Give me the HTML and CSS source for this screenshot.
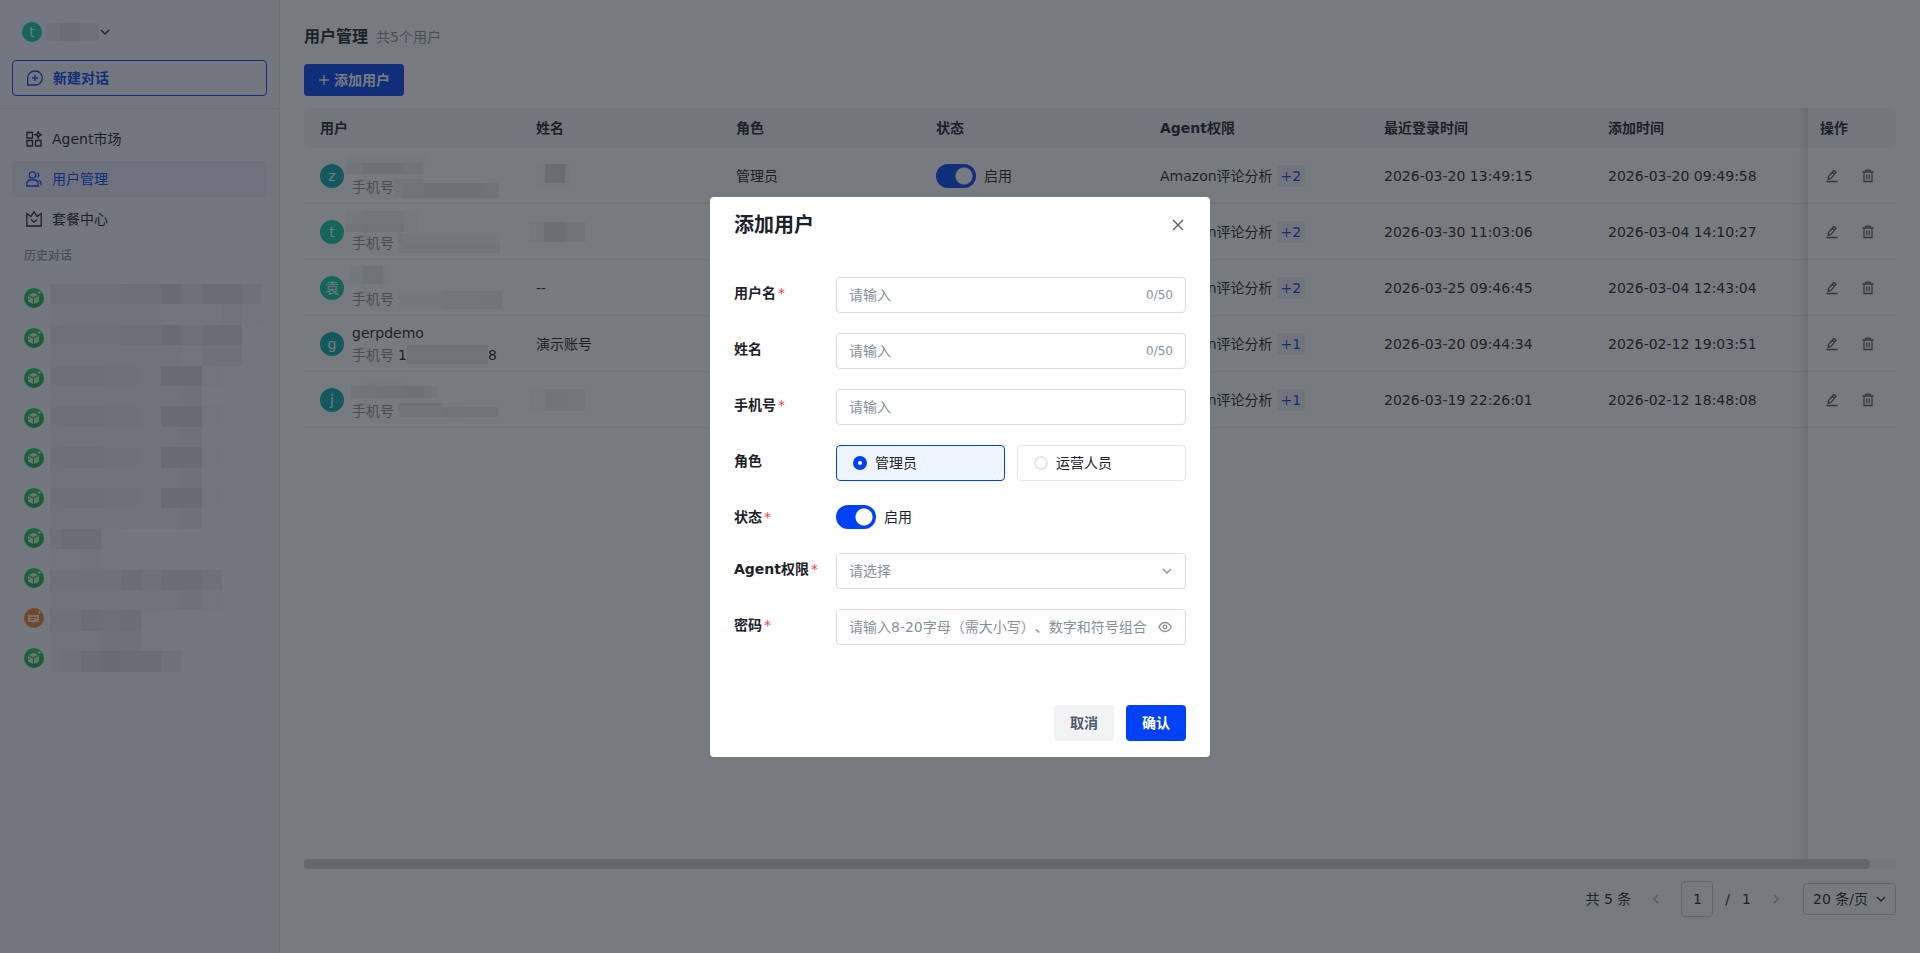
FILE: index.html
```html
<!DOCTYPE html>
<html lang="zh-CN">

<head>
  <meta charset="UTF-8">
  <meta name="viewport" content="width=device-width, initial-scale=1.0">
  <title>用户管理</title>
  <link rel="stylesheet" href="styles.css">
</head>

<body>

  <!-- 图标 -->
  <svg class="sprite" aria-hidden="true">
    <symbol id="i-down" viewBox="0 0 12 12"><path d="M2 4l4 4 4-4" /></symbol>
    <symbol id="i-left" viewBox="0 0 12 12"><path d="M8 2L4 6l4 4" /></symbol>
    <symbol id="i-right" viewBox="0 0 12 12"><path d="M4 2l4 4-4 4" /></symbol>
    <symbol id="i-plus" viewBox="0 0 12 12"><path d="M6 1v10M1 6h10" /></symbol>
    <symbol id="i-edit" viewBox="0 0 14 14"><path d="M1.500 12.500h11M3 10.300l.5-2.800 5.200-6 2.300 1.900-5.200 6zM7.300 3.200l2.200 1.900" /></symbol>
    <symbol id="i-trash" viewBox="0 0 14 14"><path d="M1.500 3h11M4.700 2.500v-1.300h4.600v1.300M3 3.500v9h8v-9M5.800 5.500v4.700M8.200 5.500v4.700" /></symbol>
    <symbol id="i-box" viewBox="0 0 20 20">
      <path class="solid" d="M9.500 4.800l4.700 2.200-4.700 2.200-4.700-2.200zM4 8l5 2.400v5.600l-5-2.500zM15 8v5.500l-5 2.500v-5.600zM14 4h1V3h1v1h1v1h-1v1h-1V5h-1z" />
      <path class="cut" d="M5 10.600l1.600.8" />
    </symbol>
    <symbol id="i-note" viewBox="0 0 20 20">
      <path class="solid" d="M4 7h11v7h-4.500l-1 1-1-1H4zM14 4h1V3h1v1h1v1h-1v1h-1V5h-1z" />
      <path class="cut-orange" d="M6 9.500h7M6 11.500h4" />
    </symbol>
  </svg>

  <div class="layout">
    <aside class="sidebar">
      <button class="account" type="button">
        <span class="avatar avatar-sm green">t</span>
        <svg class="mosaic" width="54" height="18"><rect class="m3" width="15" height="18" /><rect class="m6" x="15" width="20" height="18" /><rect class="m4" x="35" width="19" height="18" /></svg>
        <svg class="icon icon-12"><use href="#i-down" /></svg>
      </button>
      <div class="new-chat">
        <button class="new-chat-btn" type="button">
          <svg class="icon icon-16" viewBox="0 0 16 16"><path d="M.7 15V8A7 7 0 0 1 7.700 1h.6a7 7 0 0 1 0 14zM8 5v6M5 8h6" /></svg>
          新建对话
        </button>
      </div>
      <nav class="nav">
        <a href="#">
          <svg class="icon icon-16" viewBox="0 0 16 16"><path d="M1 1.500h5.500V7H1zM1 9.500h5.500V15H1zM9.500 9.500H15V15H9.500zM12.300.6l.9 2.300 2.300.9-2.300.9-.9 2.300-.9-2.300-2.300-.9 2.300-.9z" /></svg>
          Agent市场
        </a>
        <a href="#" class="active">
          <svg class="icon icon-16" viewBox="0 0 16 16"><circle cx="6.500" cy="4" r="3.200" /><path d="M.8 15v-2.500A3.500 3.500 0 0 1 4.300 9h4.400a3.500 3.500 0 0 1 3.500 3.500V15zM11.500 1.800a2.900 2.900 0 0 1 0 4.600M13 9.300c1.500.8 2.200 2.200 2.200 3.700v1.500" /></svg>
          用户管理
        </a>
        <a href="#">
          <svg class="icon icon-16" viewBox="0 0 16 16"><path d="M.8 15V2.500l4 3L8 .8l3.200 4.700 4-3V15zM5 8.500l3 2.700 3-2.700" /></svg>
          套餐中心
        </a>
      </nav>
      <h2 class="history-title">历史对话</h2>
      <div class="history">
        <ul>
          <li><svg><use href="#i-box" /></svg></li>
          <li><svg><use href="#i-box" /></svg></li>
          <li><svg><use href="#i-box" /></svg></li>
          <li><svg><use href="#i-box" /></svg></li>
          <li><svg><use href="#i-box" /></svg></li>
          <li><svg><use href="#i-box" /></svg></li>
          <li><svg><use href="#i-box" /></svg></li>
          <li><svg><use href="#i-box" /></svg></li>
          <li class="orange"><svg><use href="#i-note" /></svg></li>
          <li><svg><use href="#i-box" /></svg></li>
        </ul>
        <svg class="mosaic" id="historyMosaic" width="212" height="390" viewBox="0 0 212 390"></svg>
      </div>
    </aside>

    <main class="main">
      <header class="page-head">
        <h1>用户管理</h1>
        <span>共5个用户</span>
      </header>
      <button class="btn btn-primary btn-add" type="button">
        <svg class="icon icon-12"><use href="#i-plus" /></svg>
        添加用户
      </button>

      <div class="table-wrap">
        <table class="table">
          <colgroup>
            <col class="c-user"><col class="c-name"><col class="c-role"><col class="c-wide"><col class="c-wide"><col class="c-wide"><col><col class="c-action">
          </colgroup>
          <thead>
            <tr>
              <th>用户</th>
              <th>姓名</th>
              <th>角色</th>
              <th>状态</th>
              <th>Agent权限</th>
              <th>最近登录时间</th>
              <th>添加时间</th>
              <th>操作</th>
            </tr>
          </thead>
          <tbody>
            <tr>
              <td>
                <div class="user">
                  <span class="avatar teal">z</span>
                  <div>
                    <p><svg class="mosaic pull" width="82" height="22"><rect class="m1" width="82" height="9" /><rect class="m4" y="9" width="17" height="11" /><rect class="m6" x="17" y="9" width="41" height="11" /><rect class="m4" x="58" y="9" width="19" height="11" /></svg></p>
                    <p><span>手机号</span><svg class="mosaic" width="105" height="22"><rect class="m4" y="3" width="29" height="4" /><rect class="m3" y="7" width="9" height="15" /><rect class="m5" x="9" y="7" width="22" height="15" /><rect class="m6" x="31" y="7" width="59" height="15" /><rect class="m5" x="90" y="7" width="15" height="15" /></svg></p>
                  </div>
                </div>
              </td>
              <td><svg class="mosaic" width="34" height="24"><rect class="m1" width="34" height="24" /><rect class="m7" x="9" width="20" height="19" /></svg></td>
              <td>管理员</td>
              <td><label class="switch"><input type="checkbox" checked>启用</label></td>
              <td>Amazon评论分析<span class="tag">+2</span></td>
              <td>2026-03-20 13:49:15</td>
              <td>2026-03-20 09:49:58</td>
              <td>
                <div class="actions">
                  <button type="button" aria-label="编辑"><svg class="icon icon-14"><use href="#i-edit" /></svg></button>
                  <button type="button" aria-label="删除"><svg class="icon icon-14"><use href="#i-trash" /></svg></button>
                </div>
              </td>
            </tr>
            <tr>
              <td>
                <div class="user">
                  <span class="avatar green">t</span>
                  <div>
                    <p><svg class="mosaic pull" width="72" height="22"><rect class="m2" y="1" width="18" height="13" /><rect class="m3" x="18" y="1" width="40" height="13" /><rect class="m4" y="14" width="18" height="8" /><rect class="m5" x="18" y="14" width="40" height="8" /><rect class="m1" x="58" y="1" width="14" height="21" /></svg></p>
                    <p><span>手机号</span><svg class="mosaic gap" width="102" height="22"><rect class="m3" y="1" width="4" height="20" /><rect class="m2" x="4" y="1" width="98" height="11" /><rect class="m4" x="4" y="12" width="98" height="9" /></svg></p>
                  </div>
                </div>
              </td>
              <td><svg class="mosaic pull" width="71" height="20"><rect class="m2" width="14" height="20" /><rect class="m7" x="14" width="21" height="20" /><rect class="m5" x="35" width="20" height="20" /></svg></td>
              <td>管理员</td>
              <td><label class="switch"><input type="checkbox" checked>启用</label></td>
              <td>Amazon评论分析<span class="tag">+2</span></td>
              <td>2026-03-30 11:03:06</td>
              <td>2026-03-04 14:10:27</td>
              <td>
                <div class="actions">
                  <button type="button" aria-label="编辑"><svg class="icon icon-14"><use href="#i-edit" /></svg></button>
                  <button type="button" aria-label="删除"><svg class="icon icon-14"><use href="#i-trash" /></svg></button>
                </div>
              </td>
            </tr>
            <tr>
              <td>
                <div class="user">
                  <span class="avatar green">袁</span>
                  <div>
                    <p><svg class="mosaic pull" width="44" height="22"><rect class="m2" x="3" width="14" height="18" /><rect class="m5" x="17" width="20" height="18" /><rect class="m1" x="37" width="5" height="18" /></svg></p>
                    <p><span>手机号</span><svg class="mosaic gap" width="104" height="22"><rect class="m2" y="3" width="45" height="18" /><rect class="m3" x="45" y="3" width="38" height="18" /><rect class="m4" x="83" y="3" width="21" height="18" /></svg></p>
                  </div>
                </div>
              </td>
              <td>--</td>
              <td>管理员</td>
              <td><label class="switch"><input type="checkbox" checked>启用</label></td>
              <td>Amazon评论分析<span class="tag">+2</span></td>
              <td>2026-03-25 09:46:45</td>
              <td>2026-03-04 12:43:04</td>
              <td>
                <div class="actions">
                  <button type="button" aria-label="编辑"><svg class="icon icon-14"><use href="#i-edit" /></svg></button>
                  <button type="button" aria-label="删除"><svg class="icon icon-14"><use href="#i-trash" /></svg></button>
                </div>
              </td>
            </tr>
            <tr>
              <td>
                <div class="user">
                  <span class="avatar teal">g</span>
                  <div>
                    <p>gerpdemo</p>
                    <p><span>手机号</span><b>1</b><svg class="mosaic" width="81" height="22"><rect class="m5" y="1" width="81" height="19" /></svg>8</p>
                  </div>
                </div>
              </td>
              <td>演示账号</td>
              <td>管理员</td>
              <td><label class="switch"><input type="checkbox" checked>启用</label></td>
              <td>Amazon评论分析<span class="tag">+1</span></td>
              <td>2026-03-20 09:44:34</td>
              <td>2026-02-12 19:03:51</td>
              <td>
                <div class="actions">
                  <button type="button" aria-label="编辑"><svg class="icon icon-14"><use href="#i-edit" /></svg></button>
                  <button type="button" aria-label="删除"><svg class="icon icon-14"><use href="#i-trash" /></svg></button>
                </div>
              </td>
            </tr>
            <tr>
              <td>
                <div class="user">
                  <span class="avatar teal">j</span>
                  <div>
                    <p><svg class="mosaic pull" width="92" height="22"><rect class="m1" x="17" y="4" width="42" height="4" /><rect class="m4" x="5" y="8" width="32" height="12" /><rect class="m5" x="37" y="8" width="21" height="12" /><rect class="m6" x="58" y="8" width="20" height="12" /><rect class="m3" x="78" y="8" width="13" height="12" /></svg></p>
                    <p><span>手机号</span><svg class="mosaic gap" width="100" height="22"><rect class="m5" y="3" width="45" height="4" /><rect class="m4" y="7" width="45" height="10" /><rect class="m5" x="45" y="7" width="20" height="10" /><rect class="m4" x="65" y="7" width="35" height="10" /></svg></p>
                  </div>
                </div>
              </td>
              <td><svg class="mosaic pull" width="58" height="22"><rect class="m1" width="15" height="22" /><rect class="m4" x="15" width="20" height="22" /><rect class="m3" x="35" width="20" height="22" /></svg></td>
              <td>管理员</td>
              <td><label class="switch"><input type="checkbox" checked>启用</label></td>
              <td>Amazon评论分析<span class="tag">+1</span></td>
              <td>2026-03-19 22:26:01</td>
              <td>2026-02-12 18:48:08</td>
              <td>
                <div class="actions">
                  <button type="button" aria-label="编辑"><svg class="icon icon-14"><use href="#i-edit" /></svg></button>
                  <button type="button" aria-label="删除"><svg class="icon icon-14"><use href="#i-trash" /></svg></button>
                </div>
              </td>
            </tr>
          </tbody>
        </table>
        <div class="fixed-shadow"></div>
      </div>
      <div class="scrollbar"><div class="thumb"></div></div>

      <footer class="pager">
        <span>共 5 条</span>
        <button type="button" aria-label="上一页" disabled><svg class="icon icon-12"><use href="#i-left" /></svg></button>
        <input type="text" value="1" aria-label="页码">
        <span class="slash">/</span>
        <span>1</span>
        <button type="button" aria-label="下一页" disabled><svg class="icon icon-12"><use href="#i-right" /></svg></button>
        <div class="select">
          <select aria-label="每页条数"><option>20 条/页</option></select>
          <svg class="icon icon-12"><use href="#i-down" /></svg>
        </div>
      </footer>
    </main>
  </div>

  <!-- 添加用户弹窗 -->
  <div class="mask">
    <form class="modal" role="dialog" aria-labelledby="modalTitle">
      <header class="modal-head">
        <h2 id="modalTitle">添加用户</h2>
        <button type="button" aria-label="关闭"><svg class="icon icon-12" viewBox="0 0 12 12"><path d="M1 1l10 10M11 1L1 11" /></svg></button>
      </header>
      <div class="modal-body">
        <div class="field">
          <label for="username">用户名<i>*</i></label>
          <div class="control"><input id="username" type="text" placeholder="请输入"><span class="count">0/50</span></div>
        </div>
        <div class="field">
          <label for="realname">姓名</label>
          <div class="control"><input id="realname" type="text" placeholder="请输入"><span class="count">0/50</span></div>
        </div>
        <div class="field">
          <label for="phone">手机号<i>*</i></label>
          <div class="control"><input id="phone" type="text" placeholder="请输入"></div>
        </div>
        <div class="field">
          <span class="label">角色</span>
          <div class="radios">
            <label class="radio"><input type="radio" name="role" checked>管理员</label>
            <label class="radio"><input type="radio" name="role">运营人员</label>
          </div>
        </div>
        <div class="field">
          <label for="status">状态<i>*</i></label>
          <label class="switch"><input id="status" type="checkbox" checked>启用</label>
        </div>
        <div class="field">
          <label for="agent">Agent权限<i>*</i></label>
          <div class="control">
            <select id="agent"><option>请选择</option></select>
            <svg class="icon icon-12"><use href="#i-down" /></svg>
          </div>
        </div>
        <div class="field">
          <label for="password">密码<i>*</i></label>
          <div class="control">
            <input id="password" type="password" placeholder="请输入8-20字母（需大小写）、数字和符号组合">
            <button type="button" aria-label="显示密码"><svg class="icon icon-14" viewBox="0 0 14 14"><path d="M.8 7C2.300 4.300 4.500 2.500 7 2.500S11.700 4.300 13.200 7C11.700 9.700 9.500 11.500 7 11.500S2.300 9.700.8 7z" /><circle cx="7" cy="7" r="1.800" /></svg></button>
          </div>
        </div>
      </div>
      <footer class="modal-foot">
        <button class="btn btn-cancel" type="button">取消</button>
        <button class="btn btn-primary" type="submit">确认</button>
      </footer>
    </form>
  </div>

  <script src="script.js"></script>
</body>

</html>
```

FILE: styles.css
```css
* {
  margin: 0;
  padding: 0;
  box-sizing: border-box;
}

body {
  font: 14px/22px "DejaVu Sans", "Noto Sans CJK SC", sans-serif;
  text-spacing-trim: space-all;
  color: #1d2129;
  background-color: #fff;
}

button,
input,
select {
  font: inherit;
  color: inherit;
  text-spacing-trim: inherit;
  border: none;
  background: none;
  outline: none;
}

button {
  cursor: pointer;
}

a {
  color: inherit;
  text-decoration: none;
}

ul {
  list-style: none;
}

.sprite {
  display: none;
}

.icon {
  flex: none;
  fill: none;
  stroke: currentColor;
  stroke-width: 1.3;
}

.icon-12 {
  width: 12px;
  height: 12px;
}

.icon-14 {
  width: 14px;
  height: 14px;
}

.icon-16 {
  width: 16px;
  height: 16px;
}

/* 打码色块 */
.mosaic {
  display: block;
  flex: none;
}

.mosaic.pull {
  margin-left: -6px;
}

.mosaic.gap {
  margin-left: 4px;
}

.m1 { fill-opacity: 0.02; }
.m2 { fill-opacity: 0.03; }
.m3 { fill-opacity: 0.05; }
.m4 { fill-opacity: 0.06; }
.m5 { fill-opacity: 0.08; }
.m6 { fill-opacity: 0.1; }
.m7 { fill-opacity: 0.12; }

.layout {
  display: flex;
  min-height: 100vh;
}

/* 侧边栏 */
.sidebar {
  flex: none;
  width: 280px;
  border-right: 1px solid #e5e6eb;
  background-color: #f4f8ff;
}

.account {
  display: flex;
  align-items: center;
  gap: 3px;
  height: 60px;
  padding: 4px 22px 0;
}

.account .icon {
  margin-left: -3px;
}

.avatar {
  flex: none;
  width: 24px;
  height: 24px;
  border-radius: 50%;
  line-height: 24px;
  text-align: center;
  color: #fff;
}

.avatar-sm {
  width: 20px;
  height: 20px;
  line-height: 20px;
}

.teal {
  background-color: #06aaa8;
}

.green {
  background-color: #0ccaa6;
}

.new-chat {
  padding: 0 12px 12px;
  border-bottom: 1px solid #e5e6eb;
}

.new-chat-btn {
  display: flex;
  align-items: center;
  gap: 10px;
  width: 100%;
  height: 36px;
  padding: 0 14px;
  border: 1px solid #0041f5;
  border-radius: 4px;
  font-weight: 700;
  color: #0041f5;
}

.nav {
  display: flex;
  flex-direction: column;
  gap: 4px;
  padding: 12px 12px 11px;
}

.nav a {
  display: flex;
  align-items: center;
  gap: 10px;
  height: 36px;
  padding: 0 14px;
  border-radius: 4px;
}

.nav .active {
  color: #0041f5;
  background-color: #e5eaf9;
}

.history-title {
  padding: 0 24px;
  font-size: 12px;
  line-height: 16px;
  font-weight: 500;
  color: #86909c;
}

.history {
  display: flex;
  gap: 6px;
  padding: 20px 18px 20px 24px;
}

.history ul {
  display: flex;
  flex-direction: column;
  gap: 20px;
  padding-top: 4px;
}

.history li {
  width: 20px;
  height: 20px;
  border-radius: 50%;
  background: linear-gradient(#22cc58, #12ac40);
}

.history li svg {
  display: block;
  width: 20px;
  height: 20px;
}

.history .orange {
  background: #f08028;
}

.solid {
  fill: #fff;
  fill-opacity: 0.85;
}

.cut {
  fill: none;
  stroke: #18b848;
}

.cut-orange {
  fill: none;
  stroke: #f08028;
}

/* 主区域 */
.main {
  flex: 1;
  min-width: 0;
  display: flex;
  flex-direction: column;
  padding: 24px 24px 36px;
}

.page-head {
  display: flex;
  align-items: center;
  gap: 8px;
  height: 26px;
  margin-bottom: 14px;
}

.page-head h1 {
  font-size: 16px;
}

.page-head span {
  color: #86909c;
}

.btn {
  min-width: 60px;
  height: 36px;
  border-radius: 4px;
  font-weight: 700;
}

.btn-primary {
  color: #fff;
  background-color: #0041f5;
}

.btn-cancel {
  color: #4e5969;
  background-color: #f2f3f5;
}

.btn-add {
  display: flex;
  align-items: center;
  align-self: flex-start;
  gap: 4px;
  height: 32px;
  padding: 0 14px;
  margin-bottom: 12px;
}

.table-wrap {
  position: relative;
  flex: 1;
}

.table {
  width: 100%;
  table-layout: fixed;
  border-collapse: separate;
  border-spacing: 0;
}

.c-user {
  width: 216px;
}

.c-name,
.c-role {
  width: 200px;
}

.c-wide {
  width: 224px;
}

.c-action {
  width: 88px;
}

.table th,
.table td {
  padding: 0 16px;
  text-align: left;
  white-space: nowrap;
}

.table th {
  height: 40px;
  background-color: #f5f6fb;
}

.table th:first-child {
  border-radius: 8px 0 0 8px;
}

.table th:last-child {
  border-radius: 0 8px 8px 0;
}

.table td {
  height: 56px;
  border-bottom: 1px solid #e5e6eb;
}

.table th:last-child,
.table td:last-child {
  padding: 0 12px;
}

/* 固定列左侧阴影 */
.fixed-shadow {
  position: absolute;
  top: 0;
  right: 88px;
  bottom: 0;
  width: 10px;
  background: linear-gradient(to right, rgba(0, 0, 0, 0), rgba(0, 0, 0, 0.1));
}

.user {
  display: flex;
  align-items: center;
  gap: 8px;
}

.user p {
  display: flex;
  height: 22px;
}

.user p span {
  color: #86909c;
}

.user b {
  margin-left: 4px;
  font-weight: 400;
}

.tag {
  display: inline-block;
  margin-left: 4px;
  padding: 0 4px;
  border-radius: 2px;
  color: #0041f5;
  background-color: #f0f1f5;
}

.actions {
  display: flex;
  gap: 12px;
}

.actions button {
  display: flex;
  align-items: center;
  justify-content: center;
  width: 24px;
  height: 24px;
  color: #4e5969;
}

.scrollbar {
  height: 10px;
  background-color: #f5f6fb;
}

.thumb {
  width: calc(100% - 26px);
  height: 10px;
  border-radius: 5px;
  background-color: #c9cdd8;
}

.switch {
  display: inline-flex;
  align-items: center;
  gap: 8px;
  vertical-align: middle;
}

.switch input {
  appearance: none;
  width: 40px;
  height: 24px;
  border-radius: 12px;
  background: radial-gradient(circle at 28px 12px, #fff 8px, #0041f5 9px);
}

.pager {
  display: flex;
  align-items: center;
  justify-content: flex-end;
  margin-top: 12px;
}

.pager button {
  display: flex;
  align-items: center;
  justify-content: center;
  width: 24px;
  height: 24px;
  margin: 0 13px;
  color: #a9aeb8;
}

.pager input {
  width: 32px;
  height: 36px;
  border: 1px solid #c9cdd4;
  border-radius: 4px;
  text-align: center;
}

.slash {
  margin: 0 12px;
}

.select {
  display: flex;
  align-items: center;
  width: 93px;
  height: 32px;
  margin-left: 2px;
  padding: 0 8px 0 9px;
  border: 1px solid #c9cdd4;
  border-radius: 4px;
}

.select select,
.control select {
  flex: 1;
  min-width: 0;
  appearance: none;
}

/* 弹窗 */
.mask {
  position: fixed;
  inset: 0;
  display: flex;
  align-items: center;
  justify-content: center;
  padding-top: 1px;
  background-color: rgba(29, 33, 41, 0.6);
}

.modal {
  width: 500px;
  border-radius: 4px;
  background-color: #fff;
}

.modal-head {
  display: flex;
  align-items: center;
  justify-content: space-between;
  height: 56px;
  padding: 0 24px;
}

.modal-head h2 {
  font-size: 20px;
  line-height: 28px;
}

.modal-head button {
  display: flex;
  padding: 2px;
  color: #4e5969;
}

.modal-body {
  display: flex;
  flex-direction: column;
  gap: 20px;
  padding: 24px 24px 60px;
}

.field {
  display: flex;
}

.field>label:first-child,
.field>.label {
  flex: none;
  width: 102px;
  line-height: 32px;
  font-weight: 700;
}

.field i {
  margin-left: 2px;
  font-style: normal;
  font-weight: 400;
  color: #f53f3f;
}

.control {
  flex: 1;
  display: flex;
  align-items: center;
  height: 36px;
  padding: 0 12px;
  border: 1px solid #d8dae2;
  border-radius: 4px;
  color: #86909c;
}

.control input {
  flex: 1;
  min-width: 0;
}

.control ::placeholder {
  color: #86909c;
}

.control button {
  display: flex;
  padding: 1px;
}

.count {
  font-size: 12px;
}

.radios {
  flex: 1;
  display: flex;
  gap: 12px;
}

.radio {
  flex: 1;
  display: flex;
  align-items: center;
  gap: 8px;
  height: 36px;
  padding: 0 16px;
  border: 1px solid #e5e6eb;
  border-radius: 4px;
}

.radio:has(:checked) {
  border-color: #0041f5;
  background-color: #eef5ff;
}

.radio input {
  appearance: none;
  width: 14px;
  height: 14px;
  border: 2px solid #e5e6eb;
  border-radius: 50%;
  background-color: #fff;
}

.radio input:checked {
  border: 5px solid #0041f5;
}

.modal-foot {
  display: flex;
  justify-content: flex-end;
  gap: 12px;
  padding: 0 24px 16px;
}
```

FILE: script.js
```js
// 历史对话标题的打码色块，每个数字代表一格的深浅
var rows = [
  '33445573664', '12222211121',
  '33445573660', '22222221330',
  '35544277100', '22222223000',
  '35544277100', '22222223000',
  '35544277100', '22222223000',
  '35544277100', '22222223000',
  '36610000000', '11210000000',
  '34446366300', '22222223100',
  '34656100000', '22233100000',
  '24676630000'
]
var xs = [0, 11, 31, 51, 71, 91, 111, 131, 152, 172, 192, 211]
var svg = document.querySelector('#historyMosaic')
var html = ''
for (let i = 0; i < rows.length; i++) {
  let y = Math.round(i * 20.4)
  let h = Math.round((i + 1) * 20.4) - y
  for (let j = 0; j < xs.length - 1; j++) {
    if (rows[i][j] !== '0') {
      html += '<rect class="m' + rows[i][j] + '" x="' + xs[j] + '" y="' + y + '" width="' + (xs[j + 1] - xs[j]) + '" height="' + h + '"/>'
    }
  }
}
svg.innerHTML = html
```
